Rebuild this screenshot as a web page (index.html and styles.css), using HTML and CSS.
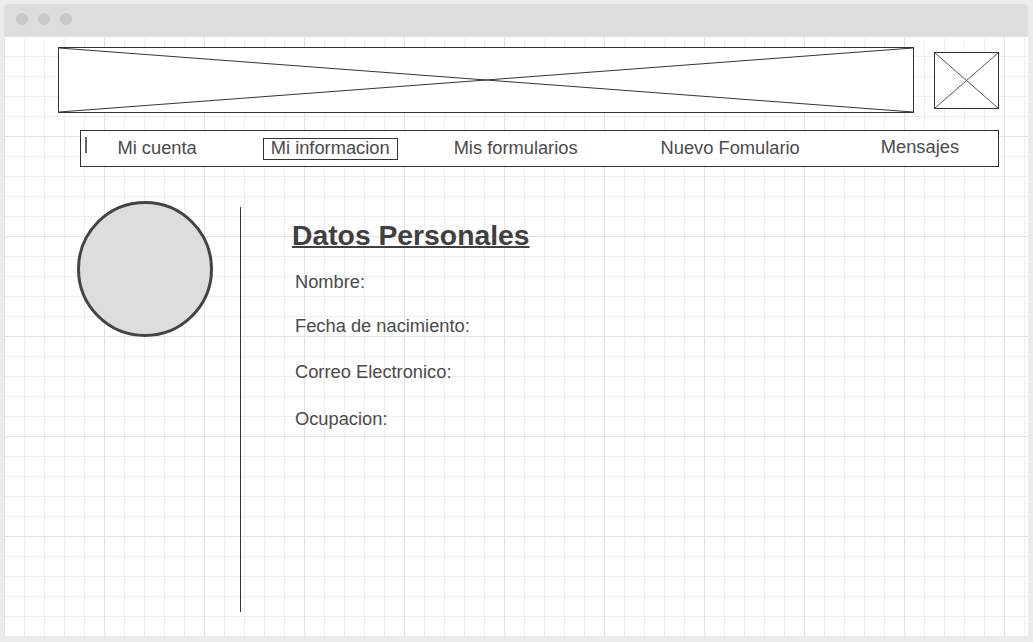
FILE: index.html
```html
<!DOCTYPE html>
<html lang="es">
<head>
<meta charset="utf-8">
<title>Mi informacion</title>
<link rel="stylesheet" href="styles.css">
</head>
<body>
<div class="window">
  <div class="titlebar">
    <span class="dot"></span><span class="dot"></span><span class="dot"></span>
  </div>
  <div class="canvas">
    <div class="header">
      <div class="banner">
        <svg class="xfill" viewBox="0 0 100 100" preserveAspectRatio="none">
          <line x1="0" y1="0" x2="100" y2="100" vector-effect="non-scaling-stroke"/>
          <line x1="0" y1="100" x2="100" y2="0" vector-effect="non-scaling-stroke"/>
        </svg>
      </div>
      <div class="thumb">
        <svg class="xfill light" viewBox="0 0 100 100" preserveAspectRatio="none">
          <line x1="0" y1="0" x2="100" y2="100" vector-effect="non-scaling-stroke"/>
          <line x1="0" y1="100" x2="100" y2="0" vector-effect="non-scaling-stroke"/>
        </svg>
      </div>
    </div>
    <nav class="nav">
      <span class="cursor"></span>
      <span class="nav-item item-cuenta">Mi cuenta</span>
      <span class="nav-item item-info active">Mi informacion</span>
      <span class="nav-item item-forms">Mis formularios</span>
      <span class="nav-item item-nuevo">Nuevo Fomulario</span>
      <span class="nav-item item-msgs">Mensajes</span>
    </nav>
    <main class="main">
      <div class="avatar"></div>
      <div class="divider"></div>
      <section class="info">
        <h1 class="title">Datos Personales</h1>
        <p class="field f-nombre">Nombre:</p>
        <p class="field f-fecha">Fecha de nacimiento:</p>
        <p class="field f-correo">Correo Electronico:</p>
        <p class="field f-ocup">Ocupacion:</p>
      </section>
    </main>
  </div>
</div>
</body>
</html>
```

FILE: styles.css
```css
* { box-sizing: border-box; }

html, body {
  margin: 0;
  padding: 0;
}

body {
  background: #ebebeb;
  font-family: "Liberation Sans", Arial, sans-serif;
  color: #444;
  width: 1033px;
  height: 642px;
  overflow: hidden;
}

.window {
  margin: 4px 0 0 4px;
  width: 1024px;
  height: 632px;
  background: #fff;
  border-radius: 4px 4px 0 0;
  overflow: hidden;
  display: flex;
  flex-direction: column;
}

.titlebar {
  height: 32px;
  background: #dddddd;
  display: flex;
  align-items: center;
  padding-left: 12px;
  gap: 10px;
  flex: none;
}

.dot {
  width: 12px;
  height: 12px;
  border-radius: 50%;
  background: #c9c9c9;
  margin-top: -2px;
}

.canvas {
  flex: 1;
  background-color: #fff;
  background-image:
    linear-gradient(to right, #e2e2e2 1px, transparent 1px),
    linear-gradient(to bottom, #e2e2e2 1px, transparent 1px),
    linear-gradient(to right, #eeeeee 1px, transparent 1px),
    linear-gradient(to bottom, #eeeeee 1px, transparent 1px);
  background-size: 100px 100px, 100px 100px, 20px 20px, 20px 20px;
  display: flex;
  flex-direction: column;
}

.header {
  display: flex;
  align-items: flex-start;
  padding: 11px 0 0 54px;
  gap: 20px;
}

.banner {
  width: 856px;
  height: 66px;
  border: 1px solid #333;
  background: #fff;
}

.thumb {
  width: 65px;
  height: 57px;
  margin-top: 5px;
  border: 1px solid #333;
  background: #fff;
}

.xfill {
  display: block;
  width: 100%;
  height: 100%;
}

.xfill line {
  stroke: #333;
  stroke-width: 1;
}

.xfill.light line {
  stroke: #555;
}

.nav {
  margin: 17px 0 0 76px;
  width: 919px;
  height: 37px;
  border: 1px solid #333;
  background: #fff;
  display: flex;
  align-items: center;
  font-size: 18.3px;
  color: #4a4a4a;
}

.cursor {
  align-self: flex-start;
  width: 1.5px;
  height: 16px;
  margin: 6px 0 0 4px;
  background: #666;
}

.nav-item {
  line-height: 20px;
  white-space: nowrap;
  margin-bottom: 2px;
}

.item-cuenta { margin-left: 31px; }
.item-info { margin-left: 66px; }
.item-forms { margin-left: 56px; }
.item-nuevo { margin-left: 83px; }
.item-msgs { margin-left: 81px; margin-bottom: 4px; }

.nav-item.active {
  border: 1px solid #333;
  padding: 0 7px 2px;
  line-height: 18px;
  margin-top: 1px;
  margin-bottom: 0;
}

.main {
  display: flex;
  align-items: flex-start;
  padding: 34px 0 0 73px;
}

.avatar {
  width: 136px;
  height: 136px;
  border-radius: 50%;
  border: 3px solid #444;
  background: #dddddd;
  flex: none;
}

.divider {
  width: 1px;
  height: 405px;
  background: #333;
  margin: 6px 0 0 27px;
  flex: none;
}

.info {
  margin: 18px 0 0 51px;
  display: flex;
  flex-direction: column;
}

.title {
  margin: 0;
  font-size: 28.3px;
  line-height: 32px;
  font-weight: bold;
  color: #404040;
  text-decoration: underline;
  text-decoration-thickness: 2px;
}

.field {
  margin: 0;
  padding-left: 3px;
  font-size: 18.3px;
  line-height: 20px;
  color: #4a4a4a;
}

.f-nombre { margin-top: 21px; }
.f-fecha { margin-top: 24px; }
.f-correo { margin-top: 26px; }
.f-ocup { margin-top: 27px; }
```
